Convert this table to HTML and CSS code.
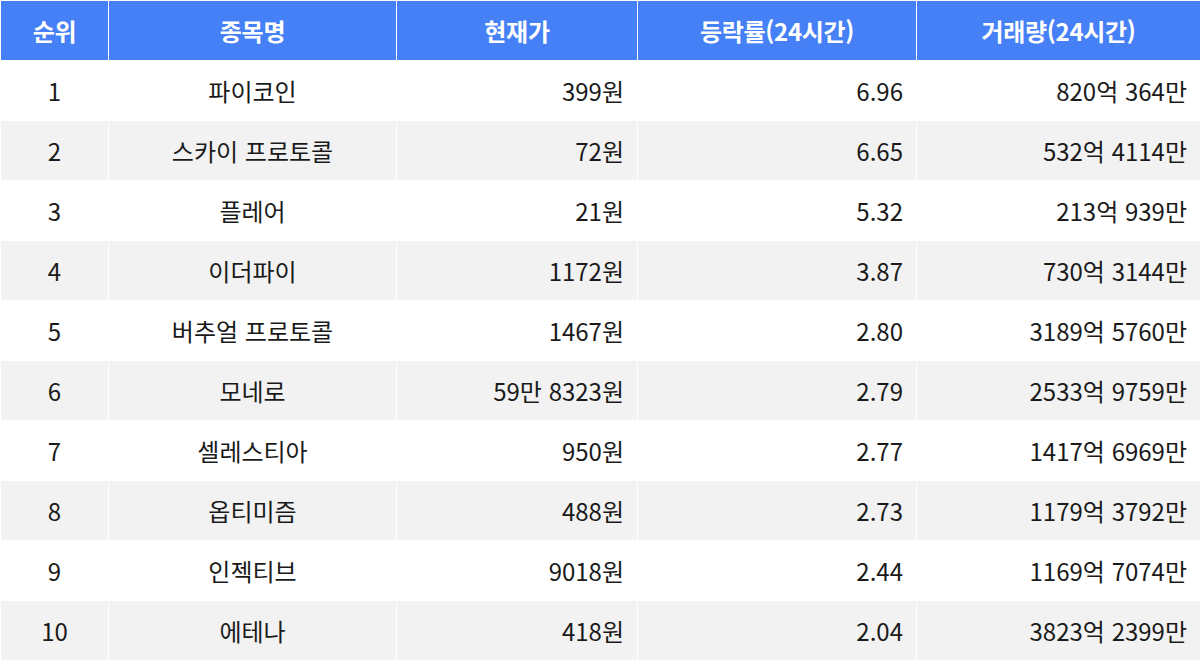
FILE: index.html
```html
<!DOCTYPE html>
<html lang="ko">
<head>
<meta charset="utf-8">
<title>코인 등락률 순위</title>
<link rel="stylesheet" href="styles.css">
</head>
<body>
<div class="table">
  <div class="th">순위</div><div class="th">종목명</div><div class="th">현재가</div><div class="th">등락률(24시간)</div><div class="th">거래량(24시간)</div>

  <div class="td c">1</div><div class="td c">파이코인</div><div class="td r">399원</div><div class="td r">6.96</div><div class="td r">820억 364만</div>
  <div class="td c alt">2</div><div class="td c alt">스카이 프로토콜</div><div class="td r alt">72원</div><div class="td r alt">6.65</div><div class="td r alt">532억 4114만</div>
  <div class="td c">3</div><div class="td c">플레어</div><div class="td r">21원</div><div class="td r">5.32</div><div class="td r">213억 939만</div>
  <div class="td c alt">4</div><div class="td c alt">이더파이</div><div class="td r alt">1172원</div><div class="td r alt">3.87</div><div class="td r alt">730억 3144만</div>
  <div class="td c">5</div><div class="td c">버추얼 프로토콜</div><div class="td r">1467원</div><div class="td r">2.80</div><div class="td r">3189억 5760만</div>
  <div class="td c alt">6</div><div class="td c alt">모네로</div><div class="td r alt">59만 8323원</div><div class="td r alt">2.79</div><div class="td r alt">2533억 9759만</div>
  <div class="td c">7</div><div class="td c">셀레스티아</div><div class="td r">950원</div><div class="td r">2.77</div><div class="td r">1417억 6969만</div>
  <div class="td c alt">8</div><div class="td c alt">옵티미즘</div><div class="td r alt">488원</div><div class="td r alt">2.73</div><div class="td r alt">1179억 3792만</div>
  <div class="td c">9</div><div class="td c">인젝티브</div><div class="td r">9018원</div><div class="td r">2.44</div><div class="td r">1169억 7074만</div>
  <div class="td c alt">10</div><div class="td c alt">에테나</div><div class="td r alt">418원</div><div class="td r alt">2.04</div><div class="td r alt">3823억 2399만</div>
</div>
</body>
</html>
```

FILE: styles.css
```css
html, body {
  margin: 0;
  padding: 0;
  background: #ffffff;
}

body {
  font-family: "Noto Sans CJK KR", "Noto Sans", sans-serif;
  color: #1a1a1a;
}

.table {
  display: grid;
  grid-template-columns: 107px 287px 240px 278px 283px;
  grid-auto-rows: 59px;
  gap: 1px;
  padding: 1px;
  background: #ffffff;
  width: 1200px;
  box-sizing: border-box;
}

.th {
  background: #4680f6;
  color: #ffffff;
  font-weight: 700;
  font-size: 24px;
  display: flex;
  align-items: center;
  justify-content: center;
  letter-spacing: -0.3px;
}

.td {
  background: #ffffff;
  font-size: 24px;
  display: flex;
  align-items: center;
}

.td.alt {
  background: #f2f2f2;
}

.td.c {
  justify-content: center;
}

.td.r {
  justify-content: flex-end;
  padding-right: 13px;
}
```
